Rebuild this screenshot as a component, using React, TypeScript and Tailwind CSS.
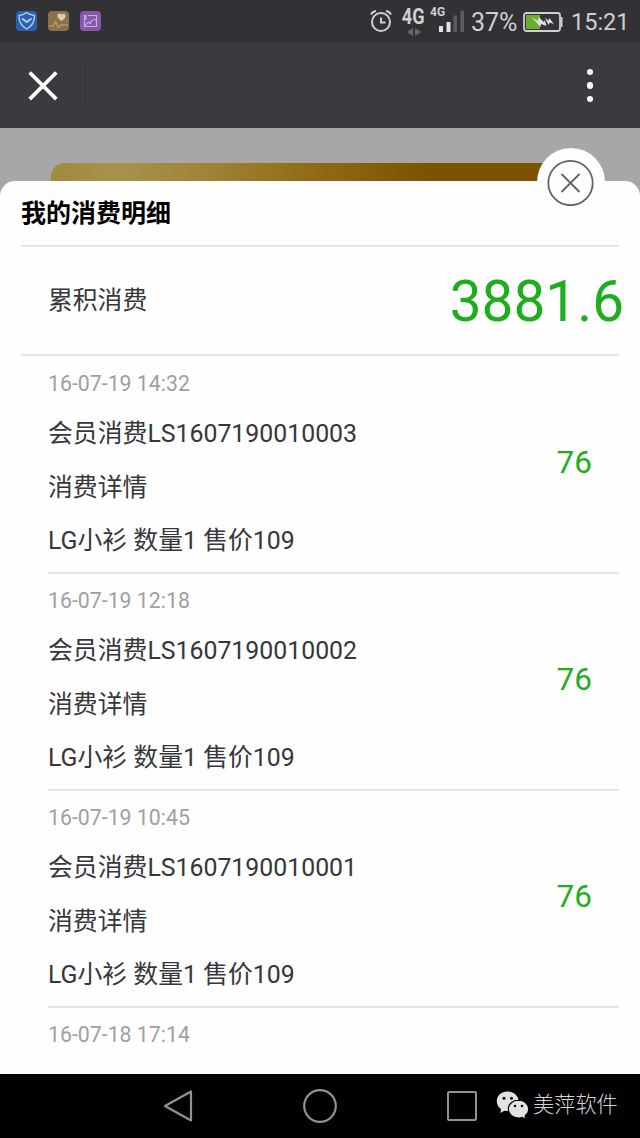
import React from "react";

const records = [
  { time: "16-07-19 14:32", order: "LS1607190010003" },
  { time: "16-07-19 12:18", order: "LS1607190010002" },
  { time: "16-07-19 10:45", order: "LS1607190010001" },
];

function StatusBar() {
  return (
    <div className="flex h-[42px] items-center bg-[#323236] pl-4 pr-3 text-[#cfcfd2]">
      <svg className="shrink-0" width="86" height="22" viewBox="0 0 86 22" fill="none">
        <rect x="0" y="1" width="21" height="20" rx="4" fill="#2c60ab" />
        <path d="M3 5.5Q8 4.8 10.7 2.5Q13.5 4.8 18.5 5.5Q18.7 14.5 10.7 19Q2.700 14.5 3 5.5Z" stroke="#a9cff8" strokeWidth="1.4" />
        <path d="M6 8.5L10.7 12L15.5 8.5" stroke="#a9cff8" strokeWidth="2" />
        <rect x="32" y="1" width="21" height="20" rx="4" fill="#897149" />
        <path d="M45.500 11C42 8.500 41 7 41.5 5C42.3 3 44.500 3.100 45.500 4.800C46.500 3.100 49 3.200 49.500 5.200C50 7.500 48 9.300 45.500 11Z" fill="#d9cfaf" />
        <path d="M33 16H37.500L39.500 11L42 18L44 15H52" stroke="#c0ac78" strokeWidth="1" />
        <rect x="64" y="1" width="21" height="20" rx="4" fill="#8558ab" />
        <path d="M72 5.500H80.500V16.500H68.500V10.500M68.500 5.500H70V9.500H68.500ZM69 15.500L72.500 12L74.500 13.500C74.500 10.500 76.500 9.500 80 9.500" stroke="#cda9e6" strokeWidth="1.2" />
      </svg>
      <svg className="ml-[267px] shrink-0" width="24" height="24" viewBox="0 0 24 24" fill="none" stroke="currentColor" strokeWidth="2">
        <circle cx="12" cy="13" r="9" />
        <path d="M12 8.5V13.5H16.5M2 5.5Q3.500 2.500 7 2M17 2Q20.500 2.500 22 5.500" />
      </svg>
      <div className="ml-[8px] flex h-[34px] w-[25px] shrink-0 flex-col items-center">
        <span className="h-[24px] origin-center scale-x-[0.93] scale-y-[1.1] font-['Roboto',sans-serif] text-[19.5px] font-bold leading-[26px]">4G</span>
        <svg width="16" height="8" viewBox="0 0 16 8" fill="#65656a">
          <path d="M7 0V8L1 4ZM9 0V8L15 4Z" />
        </svg>
      </div>
      <div className="flex h-[34px] w-[36px] shrink-0 flex-col pl-[4px]">
        <span className="h-[15px] font-['Roboto',sans-serif] text-[12px] font-bold leading-[17px]">4G</span>
      </div>
      <svg className="-ml-[24px] shrink-0" width="28" height="22" viewBox="0 0 28 22">
        <path d="M1 16h4v6H1ZM8.500 12h4v10h-4Z" fill="#e2e2e5" />
        <path d="M15.500 5.500h3.500v16.500h-3.500ZM22.500 0.500h3.500v21.500h-3.500Z" fill="#5c5c62" />
      </svg>
      <span className="ml-[5px] w-[48px] shrink-0 whitespace-nowrap pt-[3px] font-['Roboto',sans-serif] text-[25px] leading-[30px]">37%</span>
      <svg className="ml-[4px] mt-[2px] shrink-0" width="40" height="21" viewBox="0 0 40 21">
        <rect x="1" y="1" width="36" height="18" rx="2.500" fill="#343438" stroke="#cfcfd2" strokeWidth="1.800" />
        <rect x="3" y="3" width="14" height="14" fill="#6cae2d" />
        <path d="M38.500 5v10" stroke="#cfcfd2" strokeWidth="2" />
        <path d="M8.500 5L15 9L15.500 5L21 10L22 8L23.500 14L18 12L17.500 15Z" fill="#dfdfe1" />
        <path d="M22 5.500L25.500 8.500L26.500 6L31 12.500L27 10.500L25.500 13Z" fill="#dfdfe1" />
      </svg>
      <span className="ml-[8px] whitespace-nowrap pt-[2px] font-['Roboto',sans-serif] text-[23.5px] leading-[30px]">15:21</span>
    </div>
  );
}

function TitleBar() {
  return (
    <div className="flex h-[86px] items-center bg-[#3b3a3f] pl-[27px] pr-[44px]">
      <svg width="32" height="32" viewBox="0 0 32 32" stroke="#fff" strokeWidth="3.800">
        <path d="M2.700 3.500L29.300 30.100M29.300 3.500L2.700 30.100" />
      </svg>
      <div className="ml-[26px] h-[46px] w-px bg-[#323236]" />
      <div className="ml-auto flex w-[12px] flex-col items-center gap-[7px] pt-px">
        <i className="size-[6.500px] rounded-full bg-white" />
        <i className="size-[6.500px] rounded-full bg-white" />
        <i className="size-[6.500px] rounded-full bg-white" />
      </div>
    </div>
  );
}

function SystemNav() {
  return (
    <div className="flex h-16 items-center bg-[#020003] pl-[162px]">
      <svg width="32" height="36" viewBox="0 0 32 36" fill="none" stroke="#929294" strokeWidth="2.200" strokeLinejoin="round">
        <path d="M29 3.500V32.500L3 18Z" />
      </svg>
      <svg className="ml-[108px]" width="36" height="36" viewBox="0 0 36 36" fill="none" stroke="#929294" strokeWidth="2.200">
        <circle cx="18" cy="18" r="15.800" />
      </svg>
      <div className="ml-[109px] size-[30px] rounded-[2px] border-2 border-[#929294]" />
      <svg className="ml-[19px]" width="34" height="30" viewBox="0 0 34 30">
        <path d="M11.500 .5C5.100 .5 .8 4.900.8 10.300c0 3.200 1.600 5.900 4.200 7.700L4.400 22l4-2.300c1 .3 2 .4 3.100.4 6.400 0 11.100-4.400 11.100-9.800S17.900.5 11.500.5Z" fill="#e2e2e2" />
        <path d="M22.500 9.200c-5.800 0-10.200 3.800-10.200 8.900s4.400 8.900 10.200 8.900c1.400 0 2.700-.2 3.900-.6l3.500 2-.7-3.700c2.200-1.600 3.500-3.900 3.500-6.600 0-5.100-4.400-8.900-10.200-8.900Z" fill="#e2e2e2" stroke="#020003" strokeWidth="1.200" />
        <g fill="#111">
          <circle cx="8" cy="7.300" r="1.500" />
          <circle cx="15.500" cy="7.300" r="1.500" />
          <circle cx="19" cy="15" r="1.300" />
          <circle cx="26" cy="15" r="1.300" />
        </g>
      </svg>
      <span className="ml-[3px] whitespace-nowrap pb-[6px] font-['Noto_Sans_CJK_SC',sans-serif] text-[21.200px] font-light leading-[30px] text-[#d4d4d4]">美萍软件</span>
    </div>
  );
}

export default function App() {
  return (
    <div className="flex h-[1138px] w-[640px] flex-col overflow-hidden bg-[#a8a6a9] font-['Roboto','Noto_Sans_CJK_SC',sans-serif] text-[#37363a]">
      <StatusBar />
      <TitleBar />
      <div className="h-[53px] pl-[51px] pr-[51px] pt-[35px]">
        <div className="h-[18px] rounded-t-[14px] bg-[linear-gradient(90deg,#a08a3c_0%,#a8924b_12%,#a08438_28%,#916c14_48%,#7c5300_70%,#7c5300_100%)]" />
      </div>
      <main className="relative h-[893px] rounded-t-[15px] bg-[#fefefe]">
        <button aria-label="关闭" className="absolute left-[537px] top-[-33px] flex size-[68px] items-center justify-center rounded-full bg-[#fefefe]">
          <svg width="48" height="48" viewBox="0 0 48 48" fill="none" stroke="#646267" strokeWidth="1.800">
            <circle cx="23.500" cy="25" r="22.200" />
            <path d="M14.500 16L32.500 34M32.500 16L14.500 34" />
          </svg>
        </button>
        <h1 className="mx-[21px] h-[66px] border-b-2 border-[#e5e4e6] text-[25px] font-bold leading-[66px] text-black">我的消费明细</h1>
        <section className="mx-[21px] flex h-[109px] items-center justify-between border-b-2 border-[#e5e4e6] pl-[27px]">
          <span className="pt-px text-[24.800px] leading-[36px]">累积消费</span>
          <span className="-mr-[5px] pt-[2px] text-[56.700px] leading-[66px] text-[#1fad1f]">3881.6</span>
        </section>
        <div className="ml-[48px] mr-[21px] pt-px">
          {records.map((r) => (
            <article key={r.order} className="flex h-[217px] items-center justify-between border-b-2 border-[#e5e4e6]">
              <div className="flex h-full flex-col pt-[8px] text-[24.850px]">
                <time className="h-[40px] text-[21.300px] leading-[38px] text-[#a09fa2]">{r.time}</time>
                <p className="h-[53.500px] leading-[57px]">会员消费{r.order}</p>
                <p className="h-[53.500px] leading-[57px]">消费详情</p>
                <p className="h-[53.500px] leading-[57px]">LG小衫 数量1 售价109</p>
              </div>
              <span className="pb-1 pr-[27px] text-[31.500px] leading-[38px] text-[#1fad1f]">76</span>
            </article>
          ))}
          <time className="mt-[8px] block text-[21.300px] leading-[38px] text-[#a09fa2]">16-07-18 17:14</time>
        </div>
      </main>
      <SystemNav />
    </div>
  );
}
